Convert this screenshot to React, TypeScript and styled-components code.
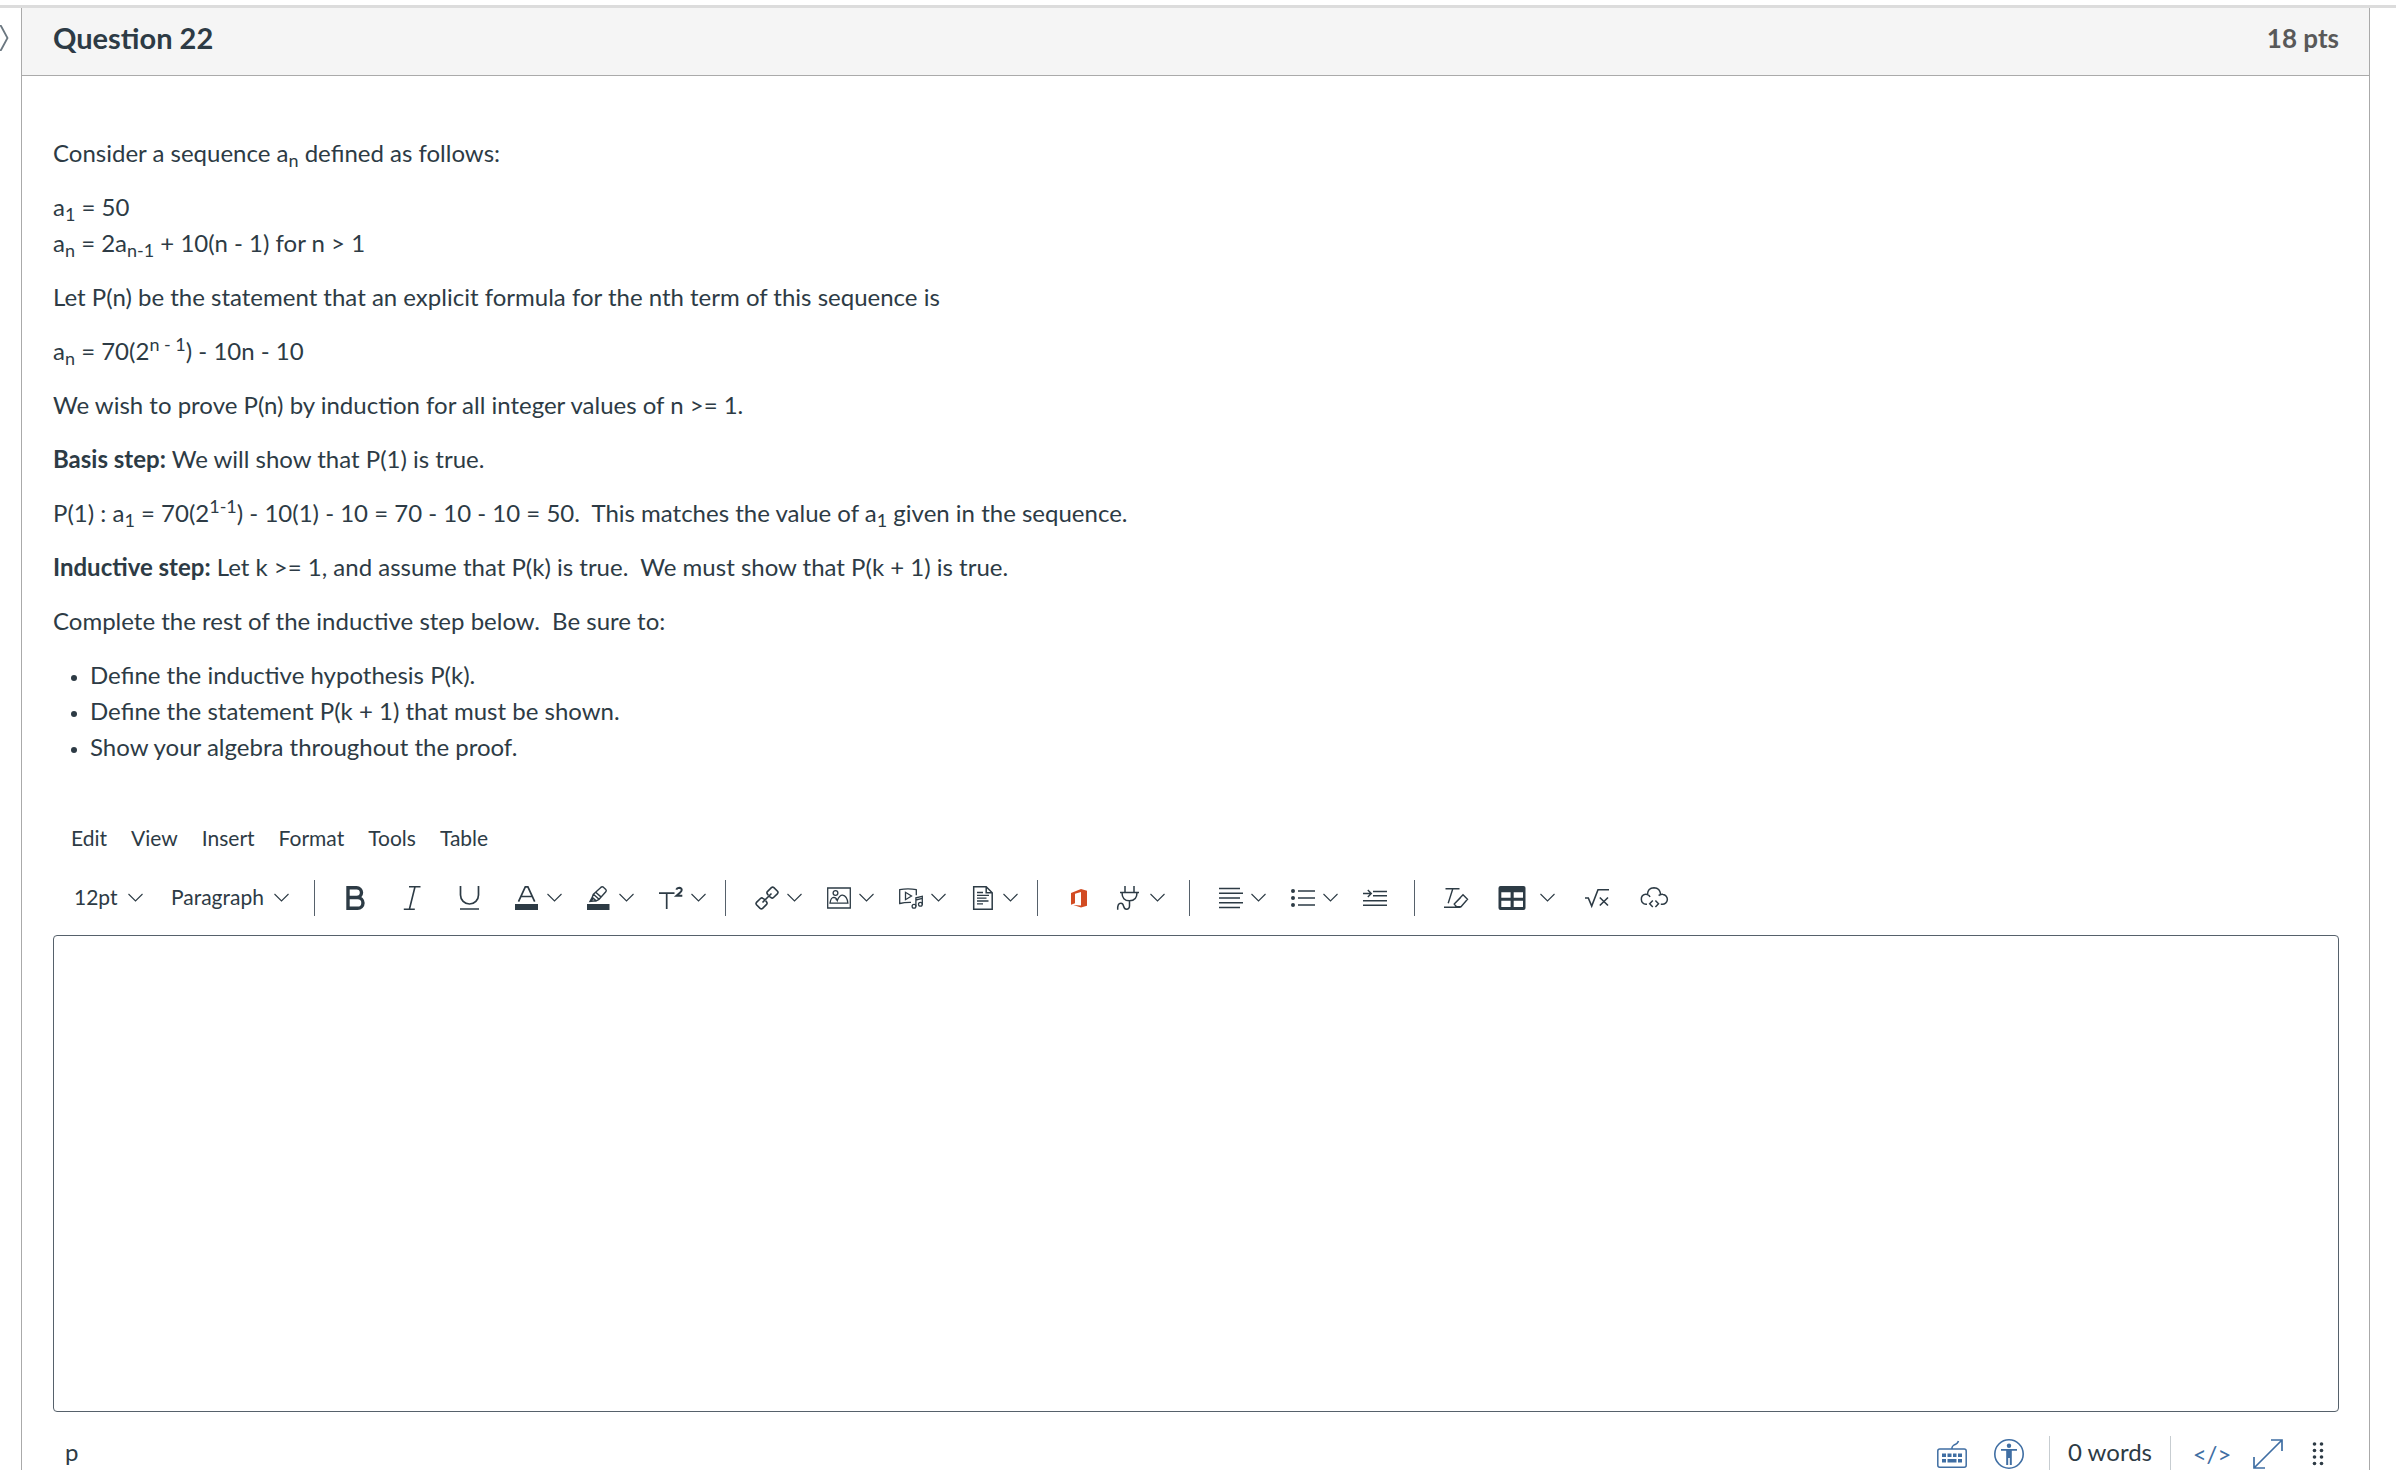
import React from "react";
import styled, { createGlobalStyle } from "styled-components";

const ink = "#2d3b45";
const blue = "#3f6ea3";

const GlobalStyle = createGlobalStyle`
  *, *::before, *::after { box-sizing: border-box; }
  body { margin: 0; background: #fff; color: ${ink}; font-family: Lato, "Liberation Sans", sans-serif; font-size: 24px; line-height: 36px; }
  button, select, textarea { font: inherit; color: inherit; }
`;

const Page = styled.div`
  display: flex;
  height: 100vh;
  overflow: hidden;
  padding-top: 5px;
`;

const Frame = styled.div`
  display: flex;
  flex: 1;
  border-top: 3px solid #dcdcdc;
`;

const Gutter = styled.aside`
  width: 21px;
  flex: none;
  padding-top: 17px;
`;

const FlagShape = styled.svg`
  display: block;
`;

const Card = styled.main`
  flex: 1;
  min-width: 0;
  margin-right: 26px;
  border: solid #aaa;
  border-width: 0 1px;
`;

const Header = styled.header`
  display: flex;
  justify-content: space-between;
  align-items: center;
  height: 68px;
  padding: 0 30px 7px 31px;
  background: #f5f5f5;
  border-bottom: 1px solid #aaa;
`;

const Title = styled.h2`
  margin: 0;
  font-size: 29px;
  font-weight: 700;
`;

const Points = styled.span`
  color: #595959;
  font-size: 26px;
  font-weight: 700;
`;

const Body = styled.div`
  padding: 59px 30px 0 31px;
`;

const Prompt = styled.section`
  p { margin: 0 0 18px; }
  ul { margin: 0; padding-left: 37px; }
  li::marker { font-size: 18px; }
  sub, sup { position: relative; font-size: 18px; line-height: 0; vertical-align: baseline; }
  sub { top: 5px; }
  sup { top: -9px; }
`;

const MenuBar = styled.nav`
  display: flex;
  gap: 24px;
  margin-top: 55px;
  padding-left: 18px;
`;

const MenuItem = styled.button`
  padding: 0;
  border: 0;
  background: none;
  font-size: 21px;
  line-height: 36px;
`;

const ToolBar = styled.div`
  display: flex;
  align-items: center;
  height: 36px;
  margin-top: 24px;
  padding-left: 21px;
`;

const SelectWrap = styled.label<{ $width: number; $gap: number }>`
  display: flex;
  align-items: center;
  justify-content: space-between;
  width: ${(p) => p.$width}px;
  margin-right: ${(p) => p.$gap}px;
`;

const Select = styled.select`
  flex: 1;
  min-width: 0;
  padding: 0 0 2px;
  border: 0;
  background: none;
  appearance: none;
  font-size: 21px;
  line-height: 30px;
`;

const Divider = styled.span`
  width: 1px;
  height: 36px;
  margin: 0 12px 0 11px;
  background: #56616b;
`;

const ToolButton = styled.button`
  display: flex;
  align-items: center;
  justify-content: center;
  width: 57px;
  height: 36px;
  padding: 0;
  border: 0;
  background: none;
`;

const MenuButton = styled.button<{ $left?: number; $gap?: number; $right?: number }>`
  display: flex;
  align-items: center;
  gap: ${(p) => p.$gap ?? 8}px;
  height: 36px;
  padding: 0 ${(p) => p.$right ?? 8}px 0 ${(p) => p.$left ?? 17}px;
  border: 0;
  background: none;
`;

const Glyph = styled.svg`
  display: block;
  flex: none;
  overflow: visible;
  fill: none;
  stroke: currentColor;
`;

const Editor = styled.textarea`
  display: block;
  width: 100%;
  height: 477px;
  margin-top: 19px;
  padding: 15px;
  border: 1px solid #56616b;
  border-radius: 4px;
  outline: 0;
  resize: none;
`;

const StatusBar = styled.footer`
  display: flex;
  justify-content: space-between;
  align-items: center;
  height: 36px;
  margin-top: 24px;
  padding-left: 12px;
`;

const StatusTools = styled.div`
  display: flex;
  align-items: center;
`;

const StatusButton = styled.button<{ $width: number }>`
  display: flex;
  align-items: center;
  justify-content: center;
  width: ${(p) => p.$width}px;
  padding: 0;
  border: 0;
  background: none;
  color: ${blue};
`;

const ResizeHandle = styled(StatusButton)`
  margin-left: 14px;
  color: ${ink};
`;

const StatusPath = styled.span`
  padding-bottom: 4px;
`;

const WordCount = styled.span`
  height: 36px;
  margin-left: 12px;
  padding: 0 18px;
  border: solid #c7cdd1;
  border-width: 0 1px;
  line-height: 32px;
`;

const Chevron = () => (
  <Glyph width="15" height="8" viewBox="0 0 15 8" strokeWidth="1.1" aria-hidden="true">
    <path d="M.5 0l7 7 7-7" />
  </Glyph>
);

const Icon = ({ children, width = 24, stroke = 1.4 }: { children: React.ReactNode; width?: number; stroke?: number }) => (
  <Glyph width={width} height="24" viewBox={`0 0 ${width} 24`} strokeWidth={stroke} aria-hidden="true">
    {children}
  </Glyph>
);

const solid = { fill: "currentColor", stroke: "none" };

const Bold = () => (
  <Icon stroke={3.4}>
    <path d="M4 1.7h8.600a4.900 4.900 0 0 1 0 9.800H4zM4 11.500h9.600a5.400 5.400 0 0 1 0 10.800H4z" />
  </Icon>
);
const Italic = () => (
  <Icon stroke={1.6}>
    <path d="M8 .8h11.500M2.800 23.200h11M14 .8L8.400 23.200" />
  </Icon>
);
const Underline = () => (
  <Icon stroke={1.7}>
    <path d="M2.500 0v9a9 9 0 0 0 18 0V0M2 23h19" />
  </Icon>
);
const TextColor = () => (
  <Icon stroke={1.7}>
    <path d="M3.500 15.700L10.300.8h2.600l6.800 14.900M6 10.500h11.200" />
    <path d="M0 18h23v6H0z" {...solid} />
  </Icon>
);
const Highlighter = () => (
  <Icon stroke={1.4}>
    <path d="M6.400 8.300L13.800 1.400q1.300-1.100 2.600-.2l2.400 2.200q1 1.200 0 2.300l-6.700 7.600zM6.400 8.300l-1.200 2.900 4 3.600 2.900-1.500M5.200 11.200L3 15.500l6.200-.7M3 15.500l3.800-3.300M8.700 6.300l5.500 4.800" />
    <path d="M0 18h22.500v6H0z" {...solid} />
  </Icon>
);
const Superscript = () => (
  <Icon stroke={1.7}>
    <path d="M0 7.200h15.500M7.700 7.200v15.800" />
    <path d="M17.300 3.700q.7-1.900 2.900-1.900 2.600.1 2.500 2.200-.1 1.300-1.800 2.800L17.500 9.800h5.800" strokeWidth="2" />
  </Icon>
);
const LinkIcon = () => (
  <Icon stroke={1.6}>
    <path d="M13.300 9.200l-1.200-1.700q-.5-1 .3-1.900l4-4q1.200-1.100 2.500 0l3.600 3.600q1 1.200 0 2.400l-4.200 4.100q-1.100.9-2.200 0l-1.600-1.100M10.700 14.800l1.200 1.700q.5 1-.3 1.900l-4 4q-1.200 1.100-2.500 0L1.500 18.800q-1-1.200 0-2.400l4.200-4.100q1.100-.9 2.200 0l1.600 1.100M7.500 16.500l9-9" />
  </Icon>
);
const ImageIcon = () => (
  <Icon stroke={1.3}>
    <path d="M.7 2h22.600v20H.7z" />
    <circle cx="8.500" cy="7" r="2.400" />
    <path d="M3 17.200q.7-5.800 3.800-5.900 2.500.1 3.500 3.200 2.200-5.400 5.200-5.300 4.600.7 5.400 8zM10.300 14.500q-.7-1.300-1.700-.8" />
  </Icon>
);
const MediaIcon = () => (
  <Icon stroke={1.3}>
    <path d="M12 16.400Q5.500 16.300.7 17.500V3.700Q9 2 17.300 3.700v5.500" />
    <path d="M6.500 6.300v7.400l6-3.700z" />
    <path d="M16.900 20.500v-8.700l6.400-1.500v8.500M16.900 14l6.400-1.600" />
    <circle cx="15" cy="20.300" r="1.900" />
    <circle cx="21.400" cy="18.300" r="1.900" />
  </Icon>
);
const DocumentIcon = () => (
  <Icon stroke={1.5}>
    <path d="M2.700.8H15.200l6 6v16.400H2.700zM15.200.8v6h6" />
    <path d="M6 6.500h6M6 9.400h12M6 12.200h9.500M6 15h11.500M6 17.800h6" strokeWidth="1.300" />
  </Icon>
);
const Office = () => (
  <Glyph width="16" height="19" viewBox="0 0 16 19" aria-hidden="true">
    <path d="M0 4l10-4 6 1.800v15L10 18.600 2.300 16l7.700.4V3L4 4.700v9.600L0 15.800z" fill="#d24b22" stroke="none" />
  </Glyph>
);
const Plug = () => (
  <Icon stroke={1.5}>
    <path d="M9 0v6M18 0v6M4 6.500h19M6 6.500c0 5.500 2.500 8.300 7.500 8.300s7.500-2.800 7.500-8.300M13.500 14.800v5c0 2-1.200 3.400-3 3.400-4.200 0-1.600-5.900-5.600-5.900-2.500 0-3.400 2.200-3.200 6.500" />
  </Icon>
);
const AlignIcon = () => (
  <Icon stroke={1.5}>
    <path d="M0 2.500h21M0 7.200h24M0 12h21M0 16.800h24M0 21.500h21" />
  </Icon>
);
const ListIcon = () => (
  <Icon stroke={1.5}>
    <path d="M7 5h17M7 12h17M7 19h17" />
    <path d="M0 5a2 2 0 1 0 4 0 2 2 0 1 0-4 0M0 12a2 2 0 1 0 4 0 2 2 0 1 0-4 0M0 19a2 2 0 1 0 4 0 2 2 0 1 0-4 0" {...solid} />
  </Icon>
);
const IndentIcon = () => (
  <Icon stroke={1.4}>
    <path d="M10 5.500h14M10 9.700h14M0 14.800h24M0 19.200h24M0 7.500h7.500M4.800 4l3.500 3.500L4.800 11" />
  </Icon>
);
const ClearFormat = () => (
  <Icon stroke={1.4}>
    <path d="M1.500 2.800h14M8.800 2.800L4.200 17.200M0 21.300h16.500M19 8.800l4.500 4.500-6.500 7.500h-4.500L10.200 18zM10.200 18l6.300-6.300" />
  </Icon>
);
const TableIcon = () => (
  <Icon width={28}>
    <path fillRule="evenodd" d="M2.500 0h23A2 2 0 0 1 27.500 2v20a2 2 0 0 1-2 2h-23a2 2 0 0 1-2-2V2a2 2 0 0 1 2-2zM3.300 6.200v5.600h9.300V6.200zM15.700 6.200v5.600H25V6.200zM3.300 14.800v6.100h9.300v-6.100zM15.700 14.800v6.100H25v-6.100z" {...solid} />
  </Icon>
);
const EquationIcon = () => (
  <Icon stroke={1.6}>
    <path d="M0 12h3.300l3.400 8L13 3.700h11M14.800 11.500l8.200 8M23 11.500l-8.200 8" />
  </Icon>
);
const CloudIcon = () => (
  <Icon width={28} stroke={1.500}>
    <path d="M7 18.200H6a5 5 0 0 1-.6-9.900q.9-.2 2 .3Q7.700 2 14 1.800q6 .2 6.700 6.800 1.100-.5 2.200-.2A4.900 4.900 0 0 1 22 18.200h-1.200M7.400 8.600q2 .6 2.600 2.500M20.700 8.600q-1.200.2-2 1" />
    <path d="M12.800 14.500L9.700 17.700l3.100 3.200M15.400 14.500l3.100 3.200-3.100 3.200" />
  </Icon>
);

const KeyboardIcon = () => (
  <Glyph width="30" height="30" viewBox="0 0 30 30" strokeWidth="1.500" aria-hidden="true">
    <rect x=".8" y="10" width="28.400" height="18.200" rx="2" />
    <path d="M15 10V8.500q.2-1.200 2-2.500 3.500-1 4.500-4" />
    <path d="M5 14.500h4v3.500H5zM10.500 14.500h4v3.500h-4zM16 14.500h3.500v3.500H16zM21 14.500h4v3.500h-4zM5 20h4v3.500H5zM10.500 20h9v3.500h-9zM21 20h4v3.500h-4z" {...solid} />
  </Glyph>
);
const AccessIcon = () => (
  <Glyph width="30" height="30" viewBox="0 0 30 30" strokeWidth="1.600" aria-hidden="true">
    <circle cx="15" cy="15" r="14.200" />
    <circle cx="15" cy="6.800" r="2.200" {...solid} />
    <path d="M7 10h16v1.800h-5.200V26h-2v-7h-1.600v7h-2V11.800H7z" {...solid} />
  </Glyph>
);
const ExpandIcon = () => (
  <Glyph width="30" height="30" viewBox="0 0 30 30" strokeWidth="1.700" aria-hidden="true">
    <path d="M18 1h11v11M29 1L1 29M1 18v11h11" />
  </Glyph>
);
const GripIcon = () => (
  <Glyph width="12" height="26" viewBox="0 0 12 26" aria-hidden="true">
    {[3, 9.500, 16, 22.500].map((y) => (
      <React.Fragment key={y}>
        <circle cx="2.500" cy={y} r="1.800" {...solid} />
        <circle cx="9.500" cy={y} r="1.800" {...solid} />
      </React.Fragment>
    ))}
  </Glyph>
);

const menus = ["Edit", "View", "Insert", "Format", "Tools", "Table"];

export default function App() {
  return (
    <Page>
      <GlobalStyle />
      <Frame>
        <Gutter>
          <FlagShape width="9" height="26" viewBox="0 0 9 26" fill="none" stroke="#6b7780" strokeWidth="1.800" aria-hidden="true">
            <path d="M-1 0L1 1l6.500 12L1 25l-2 1" />
          </FlagShape>
        </Gutter>
        <Card>
          <Header>
            <Title>Question 22</Title>
            <Points>18 pts</Points>
          </Header>
          <Body>
            <Prompt>
              <p>Consider a sequence a<sub>n</sub> defined as follows:</p>
              <p>
                a<sub>1</sub> = 50
                <br />a<sub>n</sub> = 2a<sub>n-1</sub> + 10(n - 1) for n &gt; 1
              </p>
              <p>Let P(n) be the statement that an explicit formula for the nth term of this sequence is</p>
              <p>a<sub>n</sub> = 70(2<sup>n - 1</sup>) - 10n - 10</p>
              <p>We wish to prove P(n) by induction for all integer values of n &gt;= 1.</p>
              <p><strong>Basis step:</strong> We will show that P(1) is true.</p>
              <p>
                P(1) : a<sub>1</sub> = 70(2<sup>1-1</sup>) - 10(1) - 10 = 70 - 10 - 10 = 50.&nbsp; This matches the value of a<sub>1</sub> given in the sequence.
              </p>
              <p><strong>Inductive step:</strong> Let k &gt;= 1, and assume that P(k) is true.&nbsp; We must show that P(k + 1) is true.</p>
              <p>Complete the rest of the inductive step below.&nbsp; Be sure to:</p>
              <ul>
                <li>Define the inductive hypothesis P(k).</li>
                <li>Define the statement P(k + 1) that must be shown.</li>
                <li>Show your algebra throughout the proof.</li>
              </ul>
            </Prompt>

            <MenuBar>
              {menus.map((name) => (
                <MenuItem key={name} type="button">{name}</MenuItem>
              ))}
            </MenuBar>

            <ToolBar>
              <SelectWrap $width={69} $gap={28}>
                <Select aria-label="Font size" defaultValue="12pt">
                  <option>12pt</option>
                </Select>
                <Chevron />
              </SelectWrap>
              <SelectWrap $width={118} $gap={14}>
                <Select aria-label="Text style" defaultValue="Paragraph">
                  <option>Paragraph</option>
                </Select>
                <Chevron />
              </SelectWrap>
              <Divider />
              <ToolButton type="button" aria-label="Bold"><Bold /></ToolButton>
              <ToolButton type="button" aria-label="Italic"><Italic /></ToolButton>
              <ToolButton type="button" aria-label="Underline"><Underline /></ToolButton>
              <MenuButton type="button" aria-label="Text color"><TextColor /><Chevron /></MenuButton>
              <MenuButton type="button" aria-label="Highlight color"><Highlighter /><Chevron /></MenuButton>
              <MenuButton type="button" aria-label="Superscript"><Superscript /><Chevron /></MenuButton>
              <Divider />
              <MenuButton type="button" aria-label="Links"><LinkIcon /><Chevron /></MenuButton>
              <MenuButton type="button" aria-label="Images"><ImageIcon /><Chevron /></MenuButton>
              <MenuButton type="button" aria-label="Media"><MediaIcon /><Chevron /></MenuButton>
              <MenuButton type="button" aria-label="Documents"><DocumentIcon /><Chevron /></MenuButton>
              <Divider />
              <ToolButton type="button" aria-label="Office 365"><Office /></ToolButton>
              <MenuButton type="button" aria-label="Apps" $left={9} $gap={10} $right={13}><Plug /><Chevron /></MenuButton>
              <Divider />
              <MenuButton type="button" aria-label="Align"><AlignIcon /><Chevron /></MenuButton>
              <MenuButton type="button" aria-label="Lists"><ListIcon /><Chevron /></MenuButton>
              <ToolButton type="button" aria-label="Increase indent"><IndentIcon /></ToolButton>
              <Divider />
              <ToolButton type="button" aria-label="Clear formatting"><ClearFormat /></ToolButton>
              <MenuButton type="button" aria-label="Table" $left={14} $gap={14} $right={13}><TableIcon /><Chevron /></MenuButton>
              <ToolButton type="button" aria-label="Insert equation"><EquationIcon /></ToolButton>
              <ToolButton type="button" aria-label="Embed"><CloudIcon /></ToolButton>
            </ToolBar>

            <Editor aria-label="Rich content editor" />

            <StatusBar>
              <StatusPath>p</StatusPath>
              <StatusTools>
                <StatusButton type="button" $width={57} aria-label="Keyboard shortcuts"><KeyboardIcon /></StatusButton>
                <StatusButton type="button" $width={57} aria-label="Accessibility checker"><AccessIcon /></StatusButton>
                <WordCount>0 words</WordCount>
                <StatusButton type="button" $width={82} aria-label="HTML editor">&lt;/&gt;</StatusButton>
                <StatusButton type="button" $width={30} aria-label="Fullscreen"><ExpandIcon /></StatusButton>
                <ResizeHandle type="button" $width={42} aria-label="Resize"><GripIcon /></ResizeHandle>
              </StatusTools>
            </StatusBar>
          </Body>
        </Card>
      </Frame>
    </Page>
  );
}
